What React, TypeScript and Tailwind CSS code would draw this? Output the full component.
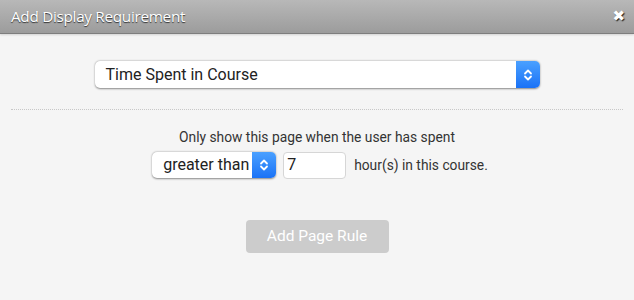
const Chevrons = () => (
  <svg width="10" height="14" viewBox="0 0 10 14" fill="none" stroke="white" strokeWidth="1.8" strokeLinecap="round" strokeLinejoin="round">
    <path d="M2 5.5 L5 2.5 L8 5.5" />
    <path d="M2 8.5 L5 11.5 L8 8.5" />
  </svg>
);

function FakeSelect({ label, className, textClass }: { label: string; className: string; textClass: string }) {
  return (
    <div className={`flex items-stretch rounded-[5px] bg-white shadow-[0_0.5px_2px_rgba(0,0,0,0.45)] ${className}`}>
      <div className={`flex-1 flex items-center text-[#222] ${textClass}`}>{label}</div>
      <div className="w-[24px] flex items-center justify-center rounded-r-[5px] bg-gradient-to-b from-[#4aa0ff] to-[#1a72f6]">
        <Chevrons />
      </div>
    </div>
  );
}

export default function App() {
  return (
    <div className="w-[634px] h-[300px] bg-[#f5f5f5] flex flex-col" style={{ fontFamily: "Roboto, 'Liberation Sans', sans-serif" }}>
      <div className="h-[34px] shrink-0 flex items-center justify-between px-[11px] bg-gradient-to-b from-[#b8b8b8] to-[#9c9c9c] border-b border-[#7e7e7e] shadow-[0_1px_2px_rgba(0,0,0,0.15)]">
        <span className="text-white text-[15.3px] tracking-[-0.3px] mt-[-1px] [text-shadow:0_1px_1px_rgba(0,0,0,0.7)]" style={{ fontFamily: "'Open Sans', 'DejaVu Sans', sans-serif" }}>
          Add Display Requirement
        </span>
        <span className="text-white text-[15px] font-bold leading-none mr-[-2px] [text-shadow:1px_1px_1px_rgba(0,0,0,0.8)]" style={{ fontFamily: "'DejaVu Sans', sans-serif" }}>
          ✖
        </span>
      </div>

      <div className="flex justify-center pt-[27px]">
        <FakeSelect label="Time Spent in Course" className="w-[445px] h-[27px]" textClass="pl-[11px] text-[16px]" />
      </div>

      <div className="mx-[11px] mt-[21px] border-t border-dotted border-[#c8c8c8]" />

      <p className="mt-[17px] text-center text-[13.8px] text-[#333]">Only show this page when the user has spent</p>

      <div className="mt-[4px] flex justify-center items-center gap-[7px] pl-[6px]">
        <FakeSelect label="greater than" className="w-[124px] h-[26px]" textClass="pl-[11px] text-[16px]" />
        <div className="w-[63px] h-[27px] bg-white border border-[#d6d6d6] rounded-[4px] flex items-center pl-[3px] text-[16px] text-[#222]">7</div>
        <span className="text-[13.8px] text-[#333] ml-[1px]">hour(s) in this course.</span>
      </div>

      <div className="flex justify-center mt-[41px]">
        <button className="w-[143px] h-[33px] rounded-[4px] bg-[#cccccc] text-white text-[15.5px]">Add Page Rule</button>
      </div>
    </div>
  );
}
